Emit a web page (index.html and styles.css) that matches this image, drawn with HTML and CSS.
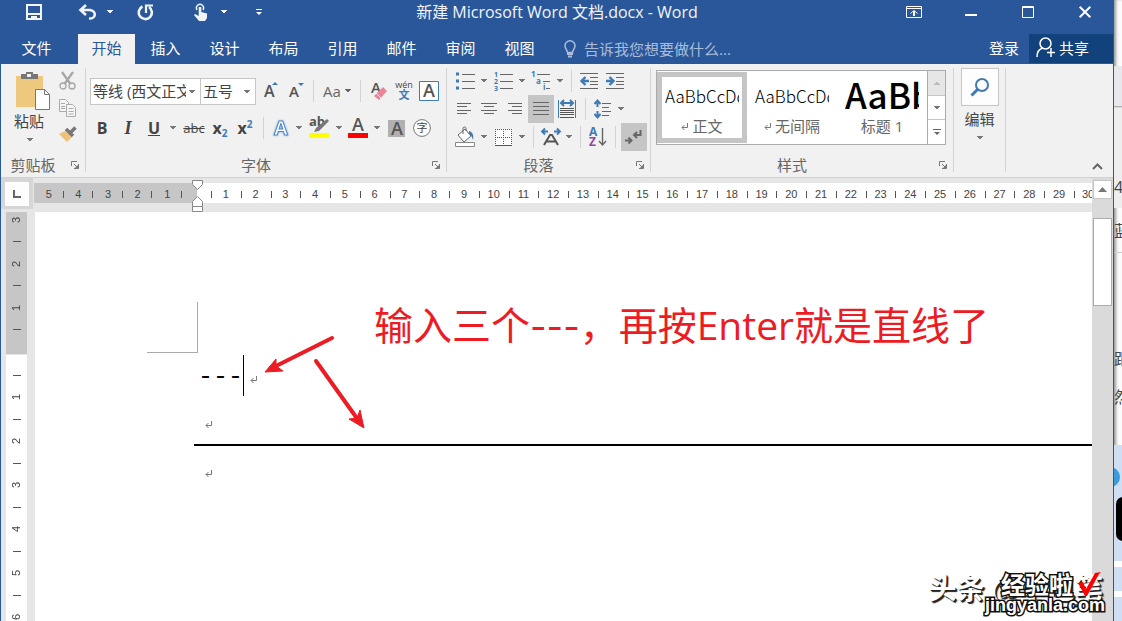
FILE: index.html
```html
<!DOCTYPE html>
<html lang="zh-CN">
<head>
<meta charset="utf-8">
<title>新建 Microsoft Word 文档.docx - Word</title>
<link rel="stylesheet" href="styles.css">
</head>
<body>
<svg class="defs" aria-hidden="true">
  <symbol id="caret" viewBox="0 0 6 4"><path d="M0 0h6v1H5v1H4v1H2V2H1V1H0z" fill="currentColor"/></symbol>
  <symbol id="launcher" viewBox="0 0 8 8"><path d="M.5 5V.5H6" fill="none" stroke="#777"/><path d="M3 3l3 3M7.500 3v4.500H3" fill="none" stroke="#777"/><path d="M7 4v3H4z" fill="#777"/></symbol>
  <symbol id="enter" viewBox="0 0 8 9"><path d="M6.500 1v4.500H1M3.500 3L1 5.500 3.500 8" fill="none" stroke="#777"/></symbol>
</svg>
<div class="desktop">
<main class="window">
  <header class="titlebar">
    <div class="quick">
      <button class="q save" aria-label="保存"><svg width="16" height="16" viewBox="0 0 16 16"><path d="M1 1h14v14H1zM1 10h14" fill="none" stroke="#f1f4f9" stroke-width="2"/><path d="M5 12h6v4H9v-2H7v2H5z" fill="#f1f4f9"/></svg></button>
      <button class="q undo" aria-label="撤消"><svg width="19" height="16" viewBox="0 0 19 16"><path d="M8 1L2.500 6 8 11M3 6h9c7 1 6 9-1 8.500" fill="none" stroke="#f1f4f9" stroke-width="2.600"/></svg></button>
      <button class="qc" aria-label="撤消选项"><svg width="6" height="4"><use href="#caret"/></svg></button>
      <button class="q redo" aria-label="重复"><svg width="17" height="17" viewBox="0 0 17 17"><path d="M5.500 2.500A6.600 6.600 0 1 0 12 3" fill="none" stroke="#f1f4f9" stroke-width="2.600"/><path d="M9 9V1.500h7" fill="none" stroke="#f1f4f9" stroke-width="2.200"/></svg></button>
      <button class="q touch" aria-label="触摸/鼠标模式"><svg width="14" height="18" viewBox="0 0 14 18"><path d="M3 7a3.600 3.600 0 1 1 6 0" fill="none" stroke="#f1f4f9" stroke-width="1.400"/><path d="M4.700 4h2.600v5l5.700 1.500v4.500L11 18H5L0 12l1-1 3.700 2z" fill="#f1f4f9"/></svg></button>
      <button class="qc" aria-label="触摸选项"><svg width="6" height="4"><use href="#caret"/></svg></button>
      <button class="qc more" aria-label="自定义快速访问工具栏"><svg width="6" height="7" viewBox="0 0 6 7"><path d="M0 .5h6" stroke="#fff"/><path d="M0 3h6L3 6z" fill="#fff"/></svg></button>
    </div>
    <h1 class="title">新建 Microsoft Word 文档.docx - Word</h1>
    <div class="controls">
      <button aria-label="功能区显示选项"><svg width="16" height="12" viewBox="0 0 16 12"><path d="M.5.5h15v11H.5zM0 2.500h16M4.500 7.500L8 4.500l3.500 3" fill="none" stroke="#fff"/><path d="M8 10V5" stroke="#fff" stroke-width="2"/></svg></button>
      <button aria-label="最小化"><svg width="12" height="12"><path d="M0 9h12" stroke="#fff" stroke-width="2"/></svg></button>
      <button aria-label="最大化"><svg width="12" height="12"><path d="M.5.5h11v11H.5zM0 1.500h12" fill="none" stroke="#fff"/></svg></button>
      <button aria-label="关闭"><svg width="12" height="12"><path d="M.7.7l10.600 10.600M11.300.7L.7 11.300" stroke="#fff" stroke-width="2"/></svg></button>
    </div>
  </header>
  <nav class="tabs">
    <button class="tab file">文件</button>
    <button class="tab active">开始</button>
    <button class="tab">插入</button>
    <button class="tab">设计</button>
    <button class="tab">布局</button>
    <button class="tab">引用</button>
    <button class="tab">邮件</button>
    <button class="tab">审阅</button>
    <button class="tab">视图</button>
    <button class="tell"><svg width="12" height="18" viewBox="0 0 12 18"><path d="M3.500 12.500C3.500 10 1 9 1 5.800a5 5 0 0 1 10 0c0 3.200-2.500 4.200-2.500 6.700z" fill="none" stroke="#a9bddb" stroke-width="1.500"/><path d="M3 14h6M4 16.500h4" stroke="#a9bddb" stroke-width="2"/></svg><span>告诉我您想要做什么...</span></button>
    <button class="login">登录</button>
    <button class="share"><svg width="20" height="21" viewBox="0 0 20 21"><circle cx="9.500" cy="6.500" r="5.500" fill="none" stroke="#fff" stroke-width="1.500"/><path d="M1 20c0-5 2-8 6-9M11 15.500h8M15 11v9" fill="none" stroke="#fff" stroke-width="1.500"/></svg><span>共享</span></button>
  </nav>

  <section class="ribbon">
    <div class="group clipboard">
      <div class="clip-body">
        <button class="paste"><svg width="36" height="40" viewBox="0 0 36 40"><path d="M2 5h27v31H2z" fill="#eec87e"/><path d="M7 3h5V1h7v2h5v5H7z" fill="#777"/><path d="M13 3h4v3h-4z" fill="#f1f1f1"/><path d="M21.500 18.500h9l5 5v15h-14z" fill="#fff" stroke="#777"/><path d="M30.500 18.500v5h5" fill="none" stroke="#777"/></svg><span>粘贴</span><svg width="6" height="4"><use href="#caret"/></svg></button>
        <div class="clip-side">
          <button aria-label="剪切"><svg width="18" height="20" viewBox="0 0 18 20"><path d="M3 1l8.500 12M14 1L5.500 13" stroke="#a6a6a6" stroke-width="2.200"/><circle cx="4" cy="15" r="3" fill="none" stroke="#a6a6a6" stroke-width="1.300"/><circle cx="13" cy="15" r="3" fill="none" stroke="#a6a6a6" stroke-width="1.300"/></svg></button>
          <button aria-label="复制"><svg width="18" height="19" viewBox="0 0 18 19"><path d="M.5.5h6l3 3v9h-9z" fill="#f6f6f6" stroke="#aaa"/><path d="M7.500 5.500h6l3 3v9h-9z" fill="#f6f6f6" stroke="#aaa"/><path d="M2 4.500h4M2 7.500h4M2 9.500h4M9.500 9.500h5M9.500 12.500h5M9.500 15h5" stroke="#aaa"/></svg></button>
          <button aria-label="格式刷"><svg width="18" height="16" viewBox="0 0 18 16"><path d="M0 8l6-3 7 6-5 5z" fill="#eec07a"/><path d="M7 3l7 7M12 6l4.500-4.500" stroke="#777" stroke-width="3.500"/></svg></button>
        </div>
      </div>
      <footer class="group-label"><span>剪贴板</span><button aria-label="剪贴板设置"><svg width="8" height="8"><use href="#launcher"/></svg></button></footer>
    </div>
    <div class="divider"></div>

    <div class="group font">
      <div class="font-body">
        <div class="row">
          <label class="combo family"><select aria-label="字体"><option>等线 (西文正文)</option></select><svg width="6" height="4"><use href="#caret"/></svg></label>
          <label class="combo size"><select aria-label="字号"><option>五号</option></select><svg width="6" height="4"><use href="#caret"/></svg></label>
          <button class="b26" aria-label="增大字号"><svg width="16" height="20"><text x="1" y="16" class="ic" font-size="16">A</text><path d="M9 4h6l-3-3z" fill="#3f7ab5"/></svg></button>
          <button class="b24" aria-label="减小字号"><svg width="16" height="20"><text x="1" y="16" class="ic" font-size="15">A</text><path d="M10 2h6l-3 3z" fill="#3f7ab5"/></svg></button>
          <i class="sep"></i>
          <button class="b36 aa">Aa<svg width="6" height="4"><use href="#caret"/></svg></button>
          <i class="sep"></i>
          <button class="b26" aria-label="清除格式"><svg width="18" height="20"><text x="1" y="12" class="ic" font-size="15">A</text><path d="M4 15L13 6l4 4-8 9z" fill="#e98598"/><path d="M6.500 12.500l5 5" stroke="#fff"/></svg></button>
          <button class="b24" aria-label="拼音指南"><svg width="18" height="20"><text x="9" y="7" text-anchor="middle" font-size="9" fill="#444">wén</text><text x="9" y="18" text-anchor="middle" font-size="11" font-weight="bold" fill="#3f7ab5">文</text></svg></button>
          <button class="b26" aria-label="字符边框"><svg width="20" height="20"><path d="M.5.5h19v19H.5z" fill="#fff" stroke="#3f7ab5"/><text x="10" y="16" text-anchor="middle" class="ic" font-size="18">A</text></svg></button>
        </div>
        <div class="row">
          <button class="b24 bold">B</button>
          <button class="b28 italic">I</button>
          <button class="b24 under">U</button>
          <button class="b14" aria-label="下划线选项"><svg width="6" height="4"><use href="#caret"/></svg></button>
          <button class="b28 strike">abc</button>
          <button class="b24 script">x<sub>2</sub></button>
          <button class="b26 script">x<sup>2</sup></button>
          <i class="sep"></i>
          <button class="b24" aria-label="文本效果"><svg class="glow" width="18" height="20"><text x="9" y="17" text-anchor="middle" font-size="20" font-weight="bold" fill="#fff" stroke="#4a86c8" stroke-width="1">A</text></svg></button>
          <button class="b12" aria-label="文本效果选项"><svg width="6" height="4"><use href="#caret"/></svg></button>
          <button class="b28" aria-label="突出显示"><svg width="20" height="22"><text x="0" y="9" font-size="13" font-weight="bold" fill="#555">ab</text><path d="M5 15l2-4 11-9 2 2-10 10z" fill="#777"/><path d="M0 16h20v5H0z" fill="#ff0"/></svg></button>
          <button class="b12" aria-label="突出显示选项"><svg width="6" height="4"><use href="#caret"/></svg></button>
          <button class="b26" aria-label="字体颜色"><svg width="20" height="22"><text x="10" y="14" text-anchor="middle" class="ic" font-size="18">A</text><path d="M0 16h20v5H0z" fill="red"/></svg></button>
          <button class="b12" aria-label="字体颜色选项"><svg width="6" height="4"><use href="#caret"/></svg></button>
          <button class="b26" aria-label="字符底纹"><svg width="17" height="17"><path d="M0 0h17v17H0z" fill="#b0b0b0"/><text x="9" y="15" text-anchor="middle" class="ic" font-size="18">A</text></svg></button>
          <button class="b26" aria-label="带圈字符"><svg width="18" height="18"><circle cx="9" cy="9" r="8.400" fill="#fff" stroke="#777"/><text x="9" y="13" text-anchor="middle" font-size="11" fill="#444">字</text></svg></button>
        </div>
      </div>
      <footer class="group-label"><span>字体</span><button aria-label="字体设置"><svg width="8" height="8"><use href="#launcher"/></svg></button></footer>
    </div>
    <div class="divider"></div>

    <div class="group para">
      <div class="para-body">
        <div class="row">
          <button class="b26" aria-label="项目符号"><svg width="19" height="18"><path d="M0 2h3M0 9h3M0 16h3" stroke="#3f7ab5" stroke-width="3"/><path d="M6 2.500h13M6 9.500h13M6 16.500h13" stroke="#666"/></svg></button>
          <button class="b12" aria-label="项目符号选项"><svg width="6" height="4"><use href="#caret"/></svg></button>
          <button class="b26" aria-label="编号"><svg width="19" height="20"><g font-size="7" font-weight="bold" fill="#3f7ab5"><text x="0" y="6">1</text><text x="0" y="13">2</text><text x="0" y="20">3</text></g><path d="M6 3.500h13M6 10.500h13M6 17.500h13" stroke="#666"/></svg></button>
          <button class="b12" aria-label="编号选项"><svg width="6" height="4"><use href="#caret"/></svg></button>
          <button class="b26" aria-label="多级列表"><svg width="20" height="20"><g font-size="8" font-weight="bold" fill="#3f7ab5"><text x="0" y="6">1</text><text x="5" y="13">a</text><text x="12" y="19">i</text></g><path d="M6 3.500h13M12 10.500h7M15 17.500h4" stroke="#666"/></svg></button>
          <button class="b12" aria-label="多级列表选项"><svg width="6" height="4"><use href="#caret"/></svg></button>
          <i class="sep"></i>
          <button class="b24" aria-label="减少缩进量"><svg width="18" height="18"><path d="M0 1.500h18M10 5.500h8M10 9.500h8M10 12.500h8M0 16.500h18" stroke="#666"/><path d="M9 9H2M5.500 5L1.500 9l4 4" fill="none" stroke="#3f7ab5" stroke-width="2.400"/></svg></button>
          <button class="b28" aria-label="增加缩进量"><svg width="18" height="18"><path d="M0 1.500h18M10 5.500h8M10 9.500h8M10 12.500h8M0 16.500h18" stroke="#666"/><path d="M0 9h7M3.500 5l4 4-4 4" fill="none" stroke="#3f7ab5" stroke-width="2.400"/></svg></button>
        </div>
        <div class="row">
          <button class="b24" aria-label="左对齐"><svg width="14" height="12"><path d="M0 .5h14M0 3.500h10M0 7.500h14M0 10.500h10" stroke="#666"/></svg></button>
          <button class="b26" aria-label="居中"><svg width="16" height="12"><path d="M0 .5h16M3 3.500h10M0 7.500h16M3 10.500h10" stroke="#666"/></svg></button>
          <button class="b26" aria-label="右对齐"><svg width="14" height="12"><path d="M0 .5h14M4 3.500h10M0 7.500h14M4 10.500h10" stroke="#666"/></svg></button>
          <button class="b26 on" aria-label="两端对齐"><svg width="16" height="14"><path d="M0 .5h16M0 4.500h16M0 8.500h16M0 12.500h16" stroke="#666"/></svg></button>
          <button class="b26" aria-label="分散对齐"><svg width="18" height="20"><path d="M.5 1v18M17.500 1v18" stroke="#3f7ab5"/><path d="M3 4h12M6 1L3 4l3 3M12 1l3 3-3 3" fill="none" stroke="#3f7ab5" stroke-width="2"/><path d="M2 9.500h14M2 11.500h14M2 13.500h14M2 15.500h14M2 18.500h14" stroke="#555"/></svg></button>
          <i class="sep"></i>
          <button class="b24" aria-label="行距"><svg width="18" height="20"><path d="M3.500 2v6M.5 5l3-3.500 3 3.500M3.500 12v6M.5 15l3 3.500 3-3.500" fill="none" stroke="#3f7ab5" stroke-width="2"/><path d="M8 4.500h9M8 8.500h7M8 12.500h9M8 16.500h7" stroke="#666"/></svg></button>
          <button class="b12" aria-label="行距选项"><svg width="6" height="4"><use href="#caret"/></svg></button>
        </div>
        <div class="row">
          <button class="b26" aria-label="底纹"><svg width="20" height="20"><path d="M3 8l7-6 6 7-7 6z" fill="#fff" stroke="#666"/><path d="M8 7V1.500a1.500 1.500 0 0 1 3 0V4" fill="none" stroke="#666"/><path d="M14 4c4 1 5 5 4 9-1-3-1-4-4-6z" fill="#3f7ab5"/><path d="M.5 15.500h19v4H.5z" fill="#fff" stroke="#888"/></svg></button>
          <button class="b12" aria-label="底纹选项"><svg width="6" height="4"><use href="#caret"/></svg></button>
          <button class="b26" aria-label="边框"><svg width="17" height="17"><path d="M.5.5h16v16H.5z" fill="#fff"/><path d="M.5 0v16M8.500 0v16M16.500 0v16M0 .5h17M0 8.500h17" stroke="#555" stroke-dasharray="1 1"/><path d="M0 16.500h17" stroke="#555"/></svg></button>
          <button class="b12" aria-label="边框选项"><svg width="6" height="4"><use href="#caret"/></svg></button>
          <i class="sep"></i>
          <button class="b24" aria-label="中文版式"><svg width="20" height="18"><path d="M3 17L9 7h2l6 10M5.500 13.500h9" fill="none" stroke="#555" stroke-width="2"/><path d="M7 3.500H2M4 .5l-3 3 3 3M13 3.500h5M16 .5l3 3-3 3" fill="none" stroke="#3f7ab5" stroke-width="1.800"/></svg></button>
          <button class="b12" aria-label="中文版式选项"><svg width="6" height="4"><use href="#caret"/></svg></button>
          <i class="sep"></i>
          <button class="b24" aria-label="排序"><svg width="18" height="20"><text x="0" y="9" font-size="12" font-weight="bold" fill="#3f7ab5">A</text><text x="0" y="19" font-size="12" font-weight="bold" fill="#8e4ba0">Z</text><path d="M13.500 1v17M10 14l3.500 4 3.500-4" fill="none" stroke="#666" stroke-width="1.400"/></svg></button>
          <i class="sep"></i>
          <button class="b26 on" aria-label="显示编辑标记"><svg width="18" height="16"><path d="M15.500 1v5H9M12 3L9 6l3 3M0 11.500h6M3.500 8.500l3 3-3 3" fill="none" stroke="#666" stroke-width="2"/></svg></button>
        </div>
      </div>
      <footer class="group-label"><span>段落</span><button aria-label="段落设置"><svg width="8" height="8"><use href="#launcher"/></svg></button></footer>
    </div>
    <div class="divider"></div>

    <div class="group styles">
      <div class="gallery">
        <button class="style chosen"><span class="sample">AaBbCcDd</span><span class="name"><svg width="8" height="9"><use href="#enter"/></svg>正文</span></button>
        <button class="style"><span class="sample">AaBbCcDd</span><span class="name"><svg width="8" height="9"><use href="#enter"/></svg>无间隔</span></button>
        <button class="style"><span class="sample big">AaBb</span><span class="name">标题 1</span></button>
        <div class="gallery-nav">
          <button class="off" aria-label="上一行"><svg class="flip" width="6" height="4"><use href="#caret"/></svg></button>
          <button aria-label="下一行"><svg width="6" height="4"><use href="#caret"/></svg></button>
          <button aria-label="其他样式"><svg width="8" height="7"><path d="M0 .5h8" stroke="#666"/><path d="M1 3h6L4 6z" fill="#666"/></svg></button>
        </div>
      </div>
      <footer class="group-label"><span>样式</span><button aria-label="样式设置"><svg width="8" height="8"><use href="#launcher"/></svg></button></footer>
    </div>
    <div class="divider"></div>

    <button class="edit"><span class="lens"><svg width="20" height="20"><circle cx="12" cy="8" r="6" fill="none" stroke="#3f7ab5" stroke-width="2"/><path d="M8 12l-6.500 6.500" stroke="#3f7ab5" stroke-width="3"/></svg></span><span>编辑</span><svg width="6" height="4"><use href="#caret"/></svg></button>
    <div class="divider"></div>
    <button class="collapse" aria-label="折叠功能区"><svg width="11" height="7"><path d="M1 6l4.500-4.500L10 6" fill="none" stroke="#666" stroke-width="2"/></svg></button>
  </section>

  <section class="workspace">
    <div class="editor">
      <div class="hruler-row">
        <div class="tabstop"><button aria-label="制表符"><svg width="8" height="8"><path d="M1 0v7h7" fill="none" stroke="#666" stroke-width="2"/></svg></button></div>
        <div class="hruler">
          <div class="neg"><span>5</span><span>4</span><span>3</span><span>2</span><span>1</span></div>
          <svg class="indent" width="12" height="32" viewBox="0 0 12 32"><path d="M.5.5h10v4l-5 5-5-5zM.5 26.500h10v5H.500zM.5 26.500v-5l5-5 5 5v5" fill="#fff" stroke="#888"/></svg>
          <div class="pos"><span>1</span><span>2</span><span>3</span><span>4</span><span>5</span><span>6</span><span>7</span><span>8</span><span>9</span><span>10</span><span>11</span><span>12</span><span>13</span><span>14</span><span>15</span><span>16</span><span>17</span><span>18</span><span>19</span><span>20</span><span>21</span><span>22</span><span>23</span><span>24</span><span>25</span><span>26</span><span>27</span><span>28</span><span>29</span><span class="cut">30</span></div>
        </div>
      </div>
      <div class="doc-row">
        <div class="vruler">
          <div class="vneg"><span>3</span><span>2</span><span>1</span></div>
          <div class="vpos"><span>1</span><span>2</span><span>3</span><span>4</span><span>5</span><span>6</span></div>
        </div>
        <article class="page">
          <div class="crop"></div>
          <p class="line first"><span class="dashes">---</span><i class="cursor"></i><svg width="8" height="9"><use href="#enter"/></svg></p>
          <p class="line second"><svg width="8" height="9"><use href="#enter"/></svg></p>
          <hr class="rule">
          <p class="line"><svg width="8" height="9"><use href="#enter"/></svg></p>
          <p class="note">输入三个<span class="hy">---</span>，再按Enter就是直线了</p>
          <svg class="arrows" width="104" height="96" viewBox="0 0 104 96"><g stroke="#ed1c24" stroke-width="4" stroke-linecap="round"><path d="M68 3L12 31M52 26l40 56"/></g><path d="M1 37l11-13v7l7 5zM100 93L85 84l8-1 3-8z" fill="#ed1c24" stroke="#ed1c24"/></svg>
        </article>
      </div>
    </div>
    <div class="scrollbar">
      <button class="up" aria-label="向上滚动"><svg width="9" height="5"><path d="M0 5h9L4.500 0z" fill="#777"/></svg></button>
      <div class="thumb"></div>
    </div>
  </section>
</main>
<aside class="behind">
  <div class="b1"></div><div class="b2"></div><div class="b3">4</div><div class="b4">蓝</div><div class="b5"></div><div class="b6">距</div><div class="b7">然</div>
  <div class="task"><i class="dot"></i><i class="tile"></i><i class="band"></i></div>
</aside>
</div>
<div class="mark-a">头条 @早巴笔</div>
<div class="mark-b"><div class="cn">经验啦<svg width="24" height="24" viewBox="0 0 24 24"><path d="M1 11l5-1 3 7L18 1l6-1-2 2-12 22H8z" fill="#f00"/></svg></div><div class="en">jingyanla.com</div></div>
</body>
</html>
```
FILE: styles.css
```css
* { box-sizing: border-box; }
body { margin: 0; height: 100vh; overflow: hidden; position: relative; font: 15px/20px "Open Sans", "Noto Sans CJK SC", sans-serif; color: #444; }
button { border: 0; padding: 0; margin: 0; background: none; font: inherit; color: inherit; display: flex; align-items: center; justify-content: center; flex: none; }
svg { display: block; flex: none; overflow: visible; }
.defs { position: absolute; width: 0; height: 0; overflow: hidden; }
.desktop { display: flex; height: 100%; }
.window { flex: 1; min-width: 0; display: flex; flex-direction: column; background: #e6e6e6; border: solid #2a579a; border-width: 0 1px; }

.titlebar { height: 34px; padding-bottom: 10px; background: #2a579a; color: #f1f4f9; display: grid; grid-template-columns: 1fr auto 1fr; align-items: center; flex: none; }
.title { margin: 0; font-size: 16px; font-weight: 400; line-height: 20px; white-space: nowrap; }
.quick { display: flex; align-items: center; }
.q { width: 20px; height: 24px; }
.save { margin-left: 23px; }
.undo { margin-left: 33px; }
.qc { width: 20px; height: 24px; margin-left: 3px; }
.redo { margin-left: 15px; }
.touch { margin-left: 36px; }
.more { margin-left: 15px; }
.controls { display: flex; justify-content: flex-end; }
.controls button { width: 57px; height: 24px; }

.tabs { height: 30px; background: #2a579a; color: #fff; display: flex; gap: 2px; flex: none; }
.tabs button { padding-bottom: 3px; }
.tab { width: 57px; }
.file { width: 71px; margin-right: 4px; }
.tab.active { background: #f1f1f1; color: #2a579a; }
.tabs .tell { gap: 8px; margin-left: 14px; color: #a9bddb; white-space: nowrap; padding-bottom: 1px; }
.login { margin-left: auto; margin-right: 8px; }
.tabs .share { width: 84px; background: #11427b; gap: 3px; padding: 0 17px 2px 0; height: 29px; }

.ribbon { height: 114px; flex: none; display: flex; background: #f1f1f1; border-bottom: 1px solid #d2d2d2; color: #666; }
.group { display: flex; flex-direction: column; justify-content: space-between; }
.divider { width: 1px; margin: 4px 0 5px; background: #d2d2d2; flex: none; }
.group-label { height: 24px; display: flex; align-items: center; padding-right: 6px; }
.group-label span { flex: 1; text-align: center; padding-right: 6px; }
.clipboard { width: 84px; }
.clip-body { display: flex; padding: 7px 0 0 13px; }
.paste { flex-direction: column; justify-content: flex-start; width: 36px; color: #444; }
.paste span { margin-right: 6px; line-height: 20px; }
.paste svg + span + svg { margin: 7px 4px 0 0; color: #777; }
.clip-side { display: flex; flex-direction: column; gap: 8px; margin-left: 9px; }
.font { width: 360px; }
.font-body { padding: 13px 4px 0; display: flex; flex-direction: column; gap: 9px; }
.row { display: flex; align-items: center; height: 28px; }
.row button { height: 28px; }
.b12 { width: 12px; } .b14 { width: 14px; } .b24 { width: 24px; } .b26 { width: 26px; } .b28 { width: 28px; } .b36 { width: 36px; }
.b12, .b14 { color: #777; }
.on { background: #c5c5c5; }
.sep { width: 1px; height: 22px; margin: 0 5px; background: #d2d2d2; flex: none; }
.combo { position: relative; height: 27px; border: 1px solid #c6c6c6; background: #fff; flex: none; }
.combo select { appearance: none; border: 0; background: none; padding: 0 0 0 2px; height: 25px; font: inherit; color: #444; overflow: hidden; }
.combo svg { position: absolute; right: 5px; top: 11px; color: #777; }
.family { width: 111px; }
.family select { width: 95px; }
.size { width: 56px; margin-left: -1px; margin-right: 2px; }
.size select { width: 38px; }
.ic { font-weight: 600; fill: #555; }
.aa { gap: 4px; }
.bold, .under { font-weight: 700; font-size: 16px; color: #444; }
.italic { font: italic 700 18px/20px "Liberation Serif", serif; color: #444; }
.under { text-decoration: underline; }
.strike { font-size: 13px; text-decoration: line-through; color: #444; }
.script { font-weight: 700; font-size: 16px; color: #444; }
.script sub, .script sup { font-size: 10px; line-height: 10px; color: #3f7ab5; }
.script sub { padding-top: 9px; }
.script sup { padding-bottom: 9px; }
.glow { filter: drop-shadow(0 0 1px #7fb0e6); }
.para { width: 203px; }
.para-body { padding: 3px 5px 0; }
.styles { width: 302px; }
.gallery { display: flex; margin: 6px 7px 0 5px; height: 75px; border: 1px solid #ababab; background: #fff; }
.style { flex: 1; min-width: 0; margin: 1px 0; border: 5px solid transparent; flex-direction: column; align-items: stretch; justify-content: space-between; }
.chosen { border-color: #c5c5c5; }
.sample { height: 36px; line-height: 38px; margin: 0 3px; overflow: hidden; white-space: nowrap; text-align: left; font-size: 17px; font-weight: 300; color: #000; font-family: "Noto Sans CJK SC", sans-serif; }
.big { font-size: 35px; line-height: 34px; font-weight: 500; }
.name { display: flex; align-items: center; justify-content: center; gap: 3px; height: 24px; }
.gallery-nav { width: 18px; display: flex; flex-direction: column; border-left: 1px solid #ababab; color: #777; }
.gallery-nav button { flex: 1; border-top: 1px solid #c6c6c6; }
.gallery-nav .off { background: #e6e6e6; color: #bbb; border-top: 0; }
.flip { transform: rotate(180deg); }
.edit { width: 51px; flex-direction: column; justify-content: flex-start; padding-top: 4px; color: #444; }
.lens { width: 38px; height: 38px; border: 1px solid #c6c6c6; background: #fdfdfd; display: flex; align-items: center; justify-content: center; margin-bottom: 3px; }
.edit span + svg { margin-top: 7px; color: #777; }
.collapse { margin-left: auto; align-self: flex-end; width: 32px; height: 22px; }

.workspace { flex: 1; min-height: 0; display: flex; }
.editor { flex: 1; min-width: 0; display: flex; flex-direction: column; }
.hruler-row { display: flex; height: 34px; flex: none; }
.tabstop { width: 33px; height: 31px; padding: 4px; background: #d6d6d6; border: solid #e6e6e6; border-width: 0 1px 0 0; }
.tabstop button { width: 24px; height: 24px; background: #fdfdfd; }
.hruler { flex: 1; min-width: 0; height: 20px; margin-top: 5px; display: flex; position: relative; font: 11px/22px "Liberation Sans", sans-serif; color: #444; }
.neg, .pos { display: grid; text-align: center; overflow: hidden; }
.neg { width: 163px; padding-right: 15px; grid-template-columns: repeat(5, 1fr); background: #c6c6c6; flex: none; }
.pos { flex: 1; min-width: 0; padding-left: 14px; grid-template-columns: repeat(29, 1fr) 18px; background: #fff; }
.neg span, .pos span { position: relative; min-width: 0; }
.neg span::after, .pos span::before { content: ""; position: absolute; top: 8px; width: 1px; height: 7px; background: #555; }
.neg span::after { right: 0; }
.pos span::before { left: 0; }
.pos .cut { padding-left: 8px; text-align: left; white-space: nowrap; }
.indent { position: absolute; left: 158px; top: -3px; z-index: 1; }
.doc-row { flex: 1; min-height: 0; display: flex; }
.vruler { width: 21px; margin: 0 8px 0 5px; display: flex; flex-direction: column; font: 11px/44px "Liberation Sans", sans-serif; overflow: hidden; }
.vneg, .vpos { display: flex; flex-direction: column; overflow: hidden; }
.vneg { height: 142px; background: #c6c6c6; justify-content: flex-end; padding-bottom: 24px; flex: none; }
.vpos { flex: 1; background: #fff; padding-top: 20px; border-top: 1px solid #e6e6e6; }
.vruler span { height: 44px; flex: none; writing-mode: vertical-rl; transform: rotate(180deg); text-align: center; line-height: 21px; width: 21px; position: relative; }
.vruler span::before { content: ""; position: absolute; width: 8px; height: 1px; left: 6px; background: #555; }
.vneg span::before { top: 0; }
.vpos span::before { bottom: 0; }
.page { flex: 1; min-width: 0; background: #fff; position: relative; padding-top: 90px; overflow: hidden; }
.crop { width: 51px; height: 51px; margin-left: 112px; border: solid #aaa; border-width: 0 1px 1px 0; }
.line { margin: 0 0 0 170px; height: 48px; display: flex; align-items: center; }
.first { height: 41px; margin: 2px 0 0 163px; }
.first svg { margin-top: 8px; }
.second { margin-top: 4px; }
.dashes { font: 25px/36px "Liberation Mono", monospace; color: #000; padding-top: 5px; }
.cursor { width: 1px; height: 41px; background: #000; margin-right: 6px; }
.rule { height: 2px; margin: -4px 0 3px 159px; border: 0; background: #000; }
.note { position: absolute; left: 339px; top: 86px; margin: 0; font-size: 39px; line-height: 54px; color: #ed1c24; white-space: nowrap; }
.hy { font-family: Inter, sans-serif; font-size: 36px; }
.arrows { position: absolute; left: 229px; top: 123px; }
.scrollbar { width: 21px; background: #dadada; padding: 2px 1px; }
.up { width: 19px; height: 19px; background: #fff; border: 1px solid #c6c6c6; }
.thumb { height: 88px; width: 19px; margin-top: 19px; background: #fff; border: 1px solid #ababab; }

.behind { width: 8px; overflow: hidden; display: flex; flex-direction: column; background: #fbfbfb; box-shadow: inset 3px 0 3px -1px #999; font-size: 16px; line-height: 20px; flex: none; }
.behind div { flex: none; }
.b1 { height: 66px; }
.b2 { height: 94px; background: linear-gradient(#e8e8ec 40px, #999 40px, #eee 42px); }
.b3 { height: 48px; padding-top: 17px; background: #eee; }
.b4 { height: 45px; padding-top: 13px; border-bottom: 1px solid #ccc; }
.b5 { height: 96px; }
.b6 { height: 38px; }
.b7 { height: 58px; }
.behind .task { flex: 1; background: #cfdef2; padding-top: 22px; }
.dot { display: block; width: 20px; height: 20px; margin-left: -14px; border-radius: 50%; background: #3c9bdc; }
.tile { display: block; width: 30px; height: 44px; margin-top: 10px; margin-left: 2px; border-radius: 7px; background: #000; }
.band { display: block; height: 36px; margin-top: 20px; border: solid #fff; border-width: 6px 0; }

.mark-a { position: absolute; right: 19px; bottom: 17px; font: 700 28px/34px "Noto Sans CJK SC", sans-serif; color: #fff; text-shadow: 1px 1px 0 #222, 2px 2px 1px #222; white-space: nowrap; }
.mark-b { position: absolute; right: 17px; bottom: 7px; color: #fff; -webkit-text-stroke: 3px #111; paint-order: stroke fill; text-align: right; }
.cn { display: flex; justify-content: flex-end; gap: 4px; padding-right: 4px; font: 700 24px/24px "Noto Sans CJK SC", sans-serif; }
.en { font: 700 18px/18px "Liberation Sans", sans-serif; }
```
